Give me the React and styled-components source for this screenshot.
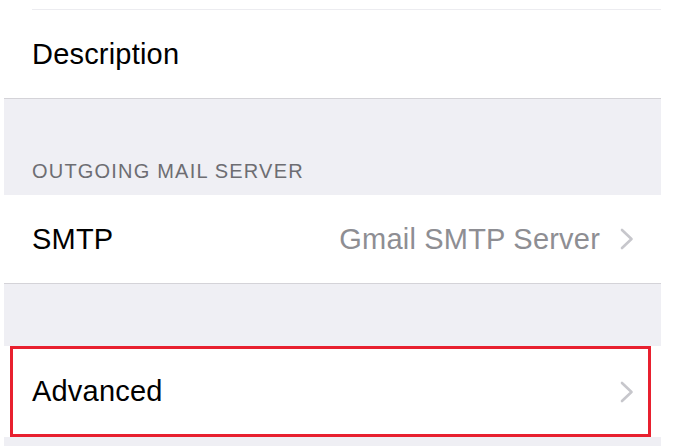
import styled, { createGlobalStyle } from "styled-components";

const GlobalStyle = createGlobalStyle`
  html, body {
    margin: 0;
    padding: 0;
    background: #ffffff;
  }
  body {
    font-family: "Liberation Sans", Arial, sans-serif;
  }
`;

const Chevron = () => (
  <svg width="14" height="22" viewBox="0 0 14 22" fill="none">
    <path
      d="M2 2 L11.5 11 L2 20"
      stroke="#c7c7cc"
      strokeWidth="2.6"
      strokeLinecap="round"
      strokeLinejoin="round"
    />
  </svg>
);

const App = () => {
  return (
    <>
      <GlobalStyle />
      <Page>
        <Group>
          <TopRule />
          <Cell $bottomBorder>
            <Label>Description</Label>
          </Cell>
        </Group>

        <SectionHeader>OUTGOING MAIL SERVER</SectionHeader>

        <Group>
          <Cell $bottomBorder>
            <Label>SMTP</Label>
            <Detail>
              <Value>Gmail SMTP Server</Value>
              <Chevron />
            </Detail>
          </Cell>
        </Group>

        <Spacer $height={62} />

        <Group>
          <Cell $tall>
            <Label>Advanced</Label>
            <Detail>
              <Chevron />
            </Detail>
            <Highlight />
          </Cell>
        </Group>

        <Spacer $height={10} />
      </Page>
    </>
  );
};

export default App;

const Page = styled.div`
  width: 657px;
  margin-left: 4px;
  background: #efeff4;
  display: flex;
  flex-direction: column;
`;

const Group = styled.section`
  background: #ffffff;
  display: flex;
  flex-direction: column;
`;

const TopRule = styled.div`
  height: 9px;
  margin-left: 28px;
  border-bottom: 1px solid #ececf0;
`;

const Cell = styled.div`
  position: relative;
  height: ${(p) => (p.$tall ? "91px" : "88px")};
  padding: 0 27px 0 28px;
  display: flex;
  align-items: center;
  justify-content: space-between;
  border-bottom: ${(p) => (p.$bottomBorder ? "1px solid #d4d3d8" : "none")};
`;

const Label = styled.span`
  font-size: 29px;
  letter-spacing: 0.2px;
  color: #000000;
`;

const Detail = styled.div`
  display: flex;
  align-items: center;
  gap: 20px;
`;

const Value = styled.span`
  font-size: 29px;
  letter-spacing: 0.2px;
  color: #8e8e93;
`;

const SectionHeader = styled.div`
  height: 96px;
  box-sizing: border-box;
  padding: 0 0 12px 28px;
  display: flex;
  align-items: flex-end;
  font-size: 20px;
  letter-spacing: 1.2px;
  color: #6d6d72;
`;

const Spacer = styled.div`
  height: ${(p) => p.$height}px;
`;

const Highlight = styled.div`
  position: absolute;
  left: 6px;
  right: 10px;
  top: 0;
  bottom: 0;
  border: 3px solid #e8202f;
  pointer-events: none;
`;
